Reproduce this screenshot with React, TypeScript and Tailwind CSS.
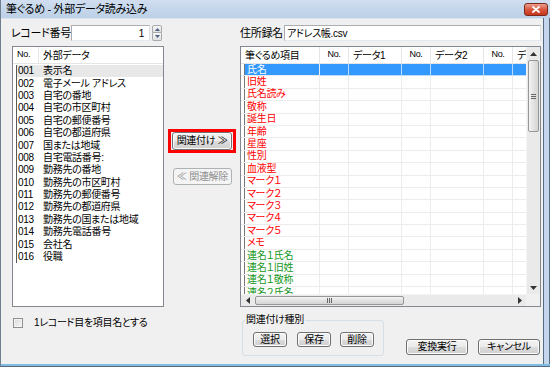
import React from "react";

const leftItems: [string, string][] = [
  ["001", "表示名"],
  ["002", "電子メール アドレス"],
  ["003", "自宅の番地"],
  ["004", "自宅の市区町村"],
  ["005", "自宅の郵便番号"],
  ["006", "自宅の都道府県"],
  ["007", "国または地域"],
  ["008", "自宅電話番号:"],
  ["009", "勤務先の番地"],
  ["010", "勤務先の市区町村"],
  ["011", "勤務先の郵便番号"],
  ["012", "勤務先の都道府県"],
  ["013", "勤務先の国または地域"],
  ["014", "勤務先電話番号"],
  ["015", "会社名"],
  ["016", "役職"],
];

const rightItems: [string, "r" | "g"][] = [
  ["氏名", "r"],
  ["旧姓", "r"],
  ["氏名読み", "r"],
  ["敬称", "r"],
  ["誕生日", "r"],
  ["年齢", "r"],
  ["星座", "r"],
  ["性別", "r"],
  ["血液型", "r"],
  ["マーク１", "r"],
  ["マーク２", "r"],
  ["マーク３", "r"],
  ["マーク４", "r"],
  ["マーク５", "r"],
  ["メモ", "r"],
  ["連名１氏名", "g"],
  ["連名１旧姓", "g"],
  ["連名１敬称", "g"],
  ["連名２氏名", "g"],
];

// widths of the mapping grid columns (last one is clipped by the scrollbar)
const cols = [29, 53, 29, 53, 29, 40];
const heads = ["No.", "データ1", "No.", "データ2", "No.", "データ3"];

const btn =
  "flex items-center justify-center rounded-[3px] border border-[#707070] bg-[linear-gradient(#f2f2f2,#ebebeb_50%,#dddddd_50%,#cfcfcf)] text-[10px] leading-none text-black shadow-[inset_0_0_0_1px_#fcfcfc]";

function Tri({ dir, color = "#000" }: { dir: "up" | "down" | "left" | "right"; color?: string }) {
  const vert = dir === "up" || dir === "down";
  const pts = {
    up: "0,4 3.5,0 7,4",
    down: "0,0 3.5,4 7,0",
    left: "4,0 0,3.5 4,7",
    right: "0,0 4,3.5 0,7",
  }[dir];
  return (
    <svg width={vert ? 7 : 4} height={vert ? 4 : 7} viewBox={vert ? "0 0 7 4" : "0 0 4 7"}>
      <polygon points={pts} fill={color} />
    </svg>
  );
}

function VScroll() {
  return (
    <div className="w-[14px] flex flex-col bg-[#eaeaea] border-l border-[#f4f4f4]">
      <div className="h-[13px] flex items-center justify-center">
        <Tri dir="up" color="#333" />
      </div>
      <div className="h-[72px] mx-[1px] rounded-[2px] border border-[#979797] bg-[linear-gradient(90deg,#f4f4f4,#e2e2e2_50%,#d4d4d4)] flex flex-col items-center justify-center gap-[1px]">
        <div className="w-[5px] h-[1px] bg-[#666]" />
        <div className="w-[5px] h-[1px] bg-[#666]" />
        <div className="w-[5px] h-[1px] bg-[#666]" />
      </div>
      <div className="flex-1" />
      <div className="h-[13px] flex items-center justify-center">
        <Tri dir="down" color="#333" />
      </div>
    </div>
  );
}

function HScroll() {
  return (
    <div className="flex-1 flex bg-[#eaeaea] border-t border-[#f4f4f4]">
      <div className="w-[13px] flex items-center justify-center">
        <Tri dir="left" color="#333" />
      </div>
      <div className="w-[149px] ml-[1px] my-[1px] rounded-[2px] border border-[#979797] bg-[linear-gradient(#f4f4f4,#e2e2e2_50%,#d4d4d4)] flex items-center justify-center gap-[1px]">
        <div className="w-[1px] h-[5px] bg-[#666]" />
        <div className="w-[1px] h-[5px] bg-[#666]" />
        <div className="w-[1px] h-[5px] bg-[#666]" />
      </div>
      <div className="flex-1" />
      <div className="w-[13px] flex items-center justify-center">
        <Tri dir="right" color="#333" />
      </div>
    </div>
  );
}

function LeftList() {
  return (
    <div className="w-[152px] h-[261px] border border-[#828790] bg-white flex flex-col overflow-hidden">
      <div className="h-[17px] flex border-b border-[#e5e5e5] shrink-0">
        <div className="w-[26px] pl-[4px] flex items-center border-r border-[#e5e5e5] text-[9px]">No.</div>
        <div className="flex-1 pl-[4px] flex items-center text-[10px]">外部データ</div>
      </div>
      <div className="ml-[3px] mt-[1px] border-l border-[#5a5a5a]">
        {leftItems.map(([no, name], i) => (
          <div
            key={no}
            className={`h-[12.4px] flex items-center text-[10px] leading-[12px] ${i === 0 ? "bg-[#e8e8e8]" : ""}`}
          >
            <span className="w-[26px] pl-[1px]">{no}</span>
            <span>{name}</span>
          </div>
        ))}
      </div>
    </div>
  );
}

function MapGrid() {
  return (
    <div className="w-[301px] h-[261px] border border-[#828790] bg-white flex flex-col">
      <div className="flex flex-1 min-h-0">
        <div className="flex-1 overflow-hidden flex flex-col">
          <div className="h-[17px] flex border-b border-[#e5e5e5] shrink-0 text-[10px]">
            <div className="w-[79px] shrink-0 pl-[4px] flex items-center border-r border-[#e5e5e5]">筆ぐるめ項目</div>
            {cols.map((w, i) => (
              <div
                key={i}
                style={{ width: w }}
                className={`shrink-0 flex items-center border-r border-[#e5e5e5] ${heads[i] === "No." ? "justify-center text-[9px]" : "pl-[4px]"}`}
              >
                {heads[i]}
              </div>
            ))}
          </div>
          {rightItems.map(([name, c], i) => {
            const sel = i === 0;
            return (
              <div key={name} className="h-[12.4px] flex shrink-0 text-[10px] leading-[12px]">
                <div className="w-[79px] shrink-0 pl-[3px] flex border-r border-b border-[#ececec]">
                  <div
                    className={`flex-1 pl-[2px] border-l border-[#777] flex items-center ${
                      sel ? "bg-[#3399ff] text-white" : c === "r" ? "text-[#ff0000]" : "text-[#16971c]"
                    }`}
                  >
                    {name}
                  </div>
                </div>
                {cols.map((w, j) => (
                  <div
                    key={j}
                    style={{ width: w }}
                    className={`shrink-0 border-r border-b ${sel ? "bg-[#3399ff] border-[#bcdcff]" : "border-[#ececec]"}`}
                  />
                ))}
              </div>
            );
          })}
        </div>
        <VScroll />
      </div>
      <div className="h-[12px] flex shrink-0">
        <HScroll />
        <div className="w-[14px] bg-[#f0f0f0]" />
      </div>
    </div>
  );
}

export default function App() {
  return (
    <div className="w-[550px] h-[367px] flex flex-col overflow-hidden whitespace-nowrap border-l border-[#6f7f90] bg-[#c3d6ec] font-['Liberation_Sans','Noto_Sans_CJK_JP',sans-serif] [font-feature-settings:'palt'] tracking-[-0.3px] text-black">
      {/* title bar */}
      <div className="h-[18px] shrink-0 flex items-center bg-[linear-gradient(#d0def0,#bcd0e7)] pl-[5px] pr-[2px]">
        <span className="text-[11px] leading-none flex-1">筆ぐるめ - 外部データ読み込み</span>
        <div className="w-[24px] h-[13px] rounded-[3px] border border-[#7d2a1e] bg-[linear-gradient(#e9a08f,#d9583f_50%,#c5361c)] flex items-center justify-center">
          <svg width="8" height="7" viewBox="0 0 8 7">
            <path d="M1 1 L7 6 M7 1 L1 6" stroke="#fff" strokeWidth="1.8" strokeLinecap="round" />
          </svg>
        </div>
      </div>

      <div className="flex flex-1 min-h-0">
        {/* client area */}
        <div className="flex-1 bg-[#f0f0f0] flex pl-[10px] border-t border-[#dbe4ee]">
          {/* left column */}
          <div className="w-[153px] pt-[6px] flex flex-col">
            <div className="h-[16px] flex items-center">
              <span className="w-[60px] text-[11px] leading-none">レコード番号</span>
              <div className="w-[79px] h-[16px] border border-[#abadb3] border-b-[#e3e9ef] border-r-[#dbdfe6] bg-white flex items-center justify-end pr-[5px] text-[10px]">
                1
              </div>
              <div className="ml-[2px] w-[10px] h-[16px] flex flex-col">
                <div className="h-[8px] border border-[#a7a9ad] rounded-t-[2px] bg-[linear-gradient(#f7f7f7,#e0e0e0)] flex items-center justify-center">
                  <svg width="5" height="3" viewBox="0 0 5 3"><polygon points="0,3 2.5,0 5,3" fill="#4d6185" /></svg>
                </div>
                <div className="h-[8px] border border-t-0 border-[#a7a9ad] rounded-b-[2px] bg-[linear-gradient(#f7f7f7,#e0e0e0)] flex items-center justify-center">
                  <svg width="5" height="3" viewBox="0 0 5 3"><polygon points="0,0 2.5,3 5,0" fill="#4d6185" /></svg>
                </div>
              </div>
            </div>
            <div className="mt-[5px] ml-[1px]">
              <LeftList />
            </div>
            <div className="mt-[10px] ml-[2px] flex items-center h-[11px]">
              <div className="w-[10px] h-[10px] border border-[#8f8f8f] bg-[linear-gradient(135deg,#dcdcdc,#f6f6f6)] shadow-[inset_0_0_0_1px_#f4f4f4]" />
              <span className="ml-[11px] text-[10px] leading-none">1レコード目を項目名とする</span>
            </div>
          </div>

          {/* middle column */}
          <div className="w-[76px] pt-[110px] flex flex-col">
            <div className="ml-[4px] w-[68px] h-[24px] border-[3px] border-[#ff0000] px-[1px] flex">
              <div className={`${btn} flex-1`}>関連付け ≫</div>
            </div>
            <div className="mt-[15px] ml-[9px] w-[59px] h-[17px] rounded-[3px] border border-[#adb2b5] bg-[#f4f4f4] text-[10px] leading-none text-[#8f8f8f] flex items-center justify-center">
              ≪ 関連解除
            </div>
          </div>

          {/* right column */}
          <div className="w-[301px] pt-[6px] flex flex-col">
            <div className="h-[16px] flex items-center">
              <span className="w-[44px] text-[11px] leading-none">住所録名</span>
              <div className="w-[257px] h-[16px] border border-[#abadb3] border-b-[#e3e9ef] border-r-[#dbdfe6] bg-white flex items-center pl-[2px] text-[10px]">
                アドレス帳.csv
              </div>
            </div>
            <div className="mt-[5px]">
              <MapGrid />
            </div>
            <div className="flex items-end mt-[7px]">
              <fieldset className="ml-[2px] w-[142px] h-[42px] border border-[#d5dfe5] rounded-[3px] p-0">
                <legend className="ml-[2px] px-[1px] text-[10px] leading-[12px]">関連付け種別</legend>
                <div className="flex pl-[10px] pt-[6px]">
                  <div className={`${btn} w-[34px] h-[15px]`}>選択</div>
                  <div className={`${btn} w-[34px] h-[15px] ml-[10px]`}>保存</div>
                  <div className={`${btn} w-[34px] h-[15px] ml-[9px]`}>削除</div>
                </div>
              </fieldset>
              <div className={`${btn} w-[62px] h-[16px] ml-[22px] mb-[1px] border-[#3c7fb1] shadow-[inset_0_0_0_1px_#cdeefc]`}>変換実行</div>
              <div className={`${btn} w-[62px] h-[16px] ml-[10px] mb-[1px]`}>キャンセル</div>
            </div>
          </div>
        </div>
        {/* right frame */}
        <div className="w-[7px] shrink-0 border-l border-[#97a9bd] border-r border-[#566a80] bg-[#c3d6ec]" />
      </div>
      {/* bottom frame */}
      <div className="h-[3px] shrink-0 bg-[#7fbbe3] border-b border-[#566a80]" />
    </div>
  );
}
